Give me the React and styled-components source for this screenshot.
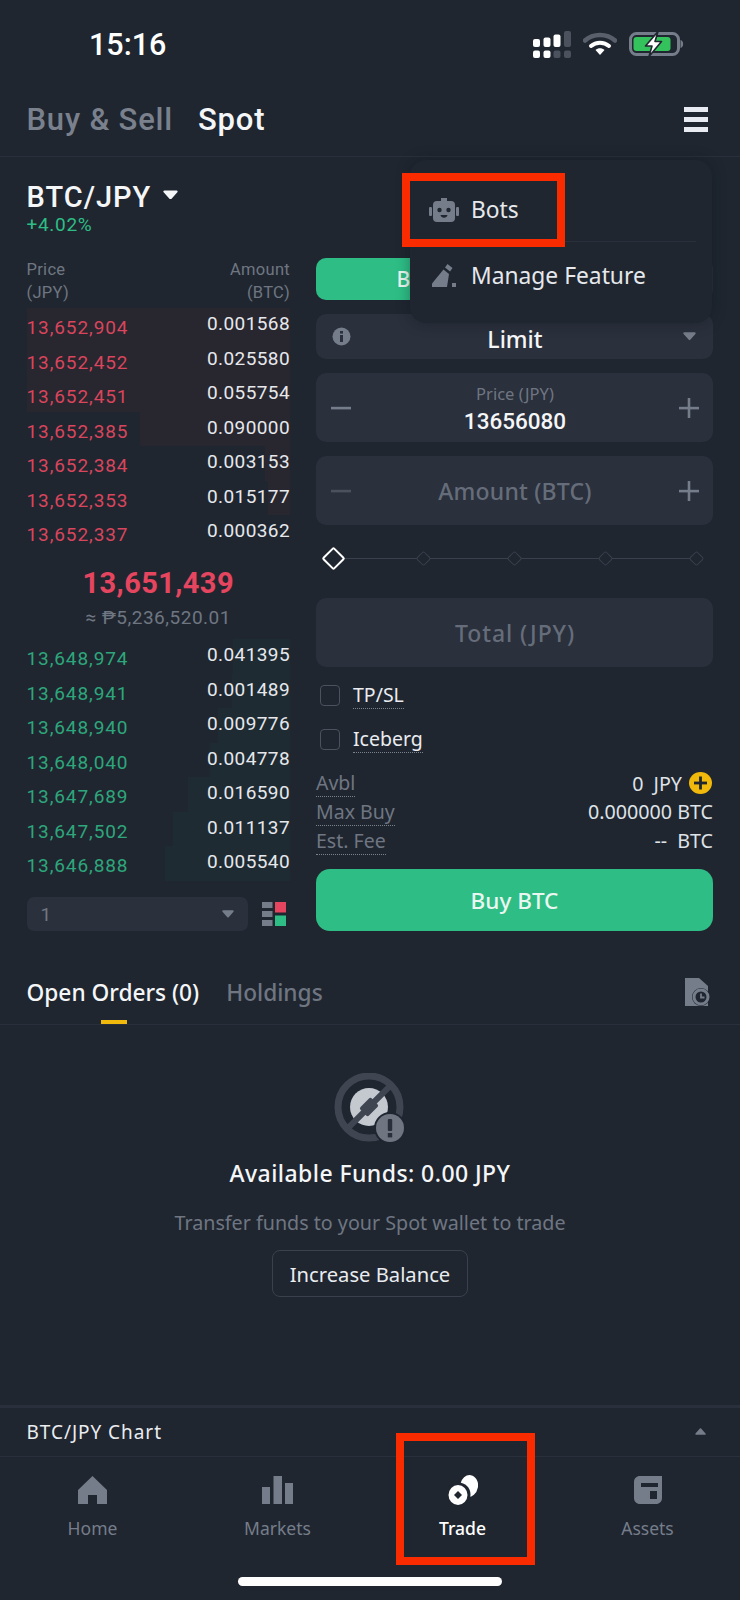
import React from 'react';
import styled, { createGlobalStyle } from 'styled-components';

const GlobalStyle = createGlobalStyle`
  html, body { margin: 0; padding: 0; background: #1f2630; }
  * { box-sizing: border-box; }
`;

const sans = `"Noto Sans", "Open Sans", sans-serif`;
const din = `Roboto, "Liberation Sans", sans-serif`;

const asks = [
  ['13,652,904', '0.001568', 263],
  ['13,652,452', '0.025580', 263],
  ['13,652,451', '0.055754', 263],
  ['13,652,385', '0.090000', 150],
  ['13,652,384', '0.003153', 25],
  ['13,652,353', '0.015177', 22],
  ['13,652,337', '0.000362', 0],
];

const bids = [
  ['13,648,974', '0.041395', 57],
  ['13,648,941', '0.001489', 58],
  ['13,648,940', '0.009776', 72],
  ['13,648,040', '0.004778', 80],
  ['13,647,689', '0.016590', 102],
  ['13,647,502', '0.011137', 117],
  ['13,646,888', '0.005540', 125],
];

const Page = styled.div`
  position: relative;
  width: 740px;
  height: 1600px;
  overflow: hidden;
  display: flex;
  flex-direction: column;
  background: #1f2630;
  color: #eaecef;
  font-family: ${sans};
`;

const StatusBar = styled.div`
  height: 88px;
  flex: none;
  display: flex;
  align-items: center;
  justify-content: space-between;
  padding: 0 56px 0 89px;
`;

const Clock = styled.span`
  font-family: ${din};
  font-size: 30.5px;
  font-weight: 500;
  color: #fff;
`;

const StatusIcons = styled.div`
  display: flex;
  align-items: center;
  gap: 12px;
`;

const Header = styled.header`
  height: 69px;
  flex: none;
  display: flex;
  align-items: flex-start;
  padding: 13px 32px 0 26.5px;
  border-bottom: 1px solid #2a303b;
`;

const HeaderTab = styled.span`
  font-family: ${din};
  font-size: 31px;
  line-height: 38px;
  font-weight: 500;
  letter-spacing: 0.8px;
  margin-right: 25px;
  color: ${p => (p.$active ? '#f5f6f8' : '#7a818d')};
`;

const Burger = styled.svg`
  margin-left: auto;
  margin-top: 6px;
`;

const Main = styled.main`
  flex: none;
  display: grid;
  grid-template-columns: 263.5px 397px;
  column-gap: 26px;
  padding: 0 27px 0 26.5px;
`;

const BookColumn = styled.section`
  padding-top: 25px;
`;

const PairRow = styled.div`
  height: 30px;
  display: flex;
  align-items: center;
  gap: 12px;
`;

const PairName = styled.span`
  font-family: ${din};
  font-size: 29px;
  font-weight: 500;
  letter-spacing: 1px;
  color: #f5f6f8;
`;

const PairCaret = styled.span`
  display: flex;
  margin-bottom: 5px;
`;

const Change = styled.div`
  height: 20px;
  margin-top: 3px;
  font-family: ${din};
  font-size: 19px;
  line-height: 20px;
  letter-spacing: 0.7px;
  color: #2ebd85;
`;

const BookHead = styled.div`
  margin: 23px 0 4px;
  display: flex;
  justify-content: space-between;
  font-family: ${din};
  font-size: 16.5px;
  line-height: 23px;
  letter-spacing: 0.3px;
  color: #6f7682;
`;

const HeadRight = styled.div`
  text-align: right;
`;

const BookRow = styled.div`
  position: relative;
  height: 34.5px;
  display: flex;
  justify-content: space-between;
  font-family: ${din};
  font-size: 19px;
`;

const DepthBar = styled.div`
  position: absolute;
  top: 0;
  right: 0;
  bottom: 0;
  background: ${p => (p.$side === 'ask' ? '#28262f' : '#1f2b33')};
`;

const RowPrice = styled.span`
  position: relative;
  line-height: 39px;
  letter-spacing: 0.9px;
  color: ${p => (p.$side === 'ask' ? '#d9455c' : '#2ea67c')};
`;

const RowAmount = styled.span`
  position: relative;
  line-height: 32px;
  letter-spacing: 0.4px;
  color: #e6e8ec;
`;

const LastPrice = styled.div`
  margin-top: 13.5px;
  text-align: center;
  font-family: ${din};
  font-size: 29px;
  line-height: 40px;
  font-weight: 700;
  letter-spacing: 0.4px;
  color: #e6455f;
`;

const FiatPrice = styled.div`
  margin: 3px 0 9px;
  text-align: center;
  font-family: ${din};
  font-size: 19px;
  line-height: 24px;
  letter-spacing: 0.5px;
  color: #6f7682;
`;

const BookFooter = styled.div`
  margin-top: 16.5px;
  display: flex;
  align-items: center;
  justify-content: space-between;
`;

const StepSelect = styled.div`
  width: 221px;
  height: 34px;
  display: flex;
  align-items: center;
  justify-content: space-between;
  padding: 0 14px;
  border-radius: 7px;
  background: #2a303c;
  font-family: ${din};
  font-size: 19px;
  color: #6f7682;
`;

const DepthIcon = styled.svg`
  margin-right: 4px;
`;

const FormColumn = styled.section`
  padding-top: 101px;
  display: flex;
  flex-direction: column;
  gap: 14px;
`;

const SideToggle = styled.div`
  height: 42px;
  display: grid;
  grid-template-columns: 199px 1fr;
  border-radius: 10px;
  overflow: hidden;
  background: #2a303c;
`;

const SideOption = styled.div`
  display: flex;
  align-items: center;
  justify-content: center;
  font-size: 21px;
  font-weight: 500;
  color: #eaf7f1;
  background: ${p => (p.$active ? '#2ebd85' : 'transparent')};
`;

const Field = styled.div`
  height: ${p => p.$height || 69}px;
  display: flex;
  align-items: center;
  padding: 0 14px 0 15px;
  border-radius: 10px;
  background: #2a303c;
`;

const FieldSide = styled.div`
  width: 20px;
  flex: none;
  display: flex;
  justify-content: center;
`;

const FieldCenter = styled.div`
  flex: 1;
  padding-top: ${p => p.$nudge || 0}px;
  text-align: center;
`;

const FieldLabel = styled.div`
  font-size: 16.5px;
  line-height: 24px;
  color: #6f7682;
`;

const FieldValue = styled.div`
  font-family: ${din};
  font-size: 22.5px;
  line-height: 30px;
  font-weight: 500;
  color: #f5f6f8;
`;

const FieldText = styled.div`
  font-size: 23px;
  line-height: 30px;
  font-weight: 500;
  letter-spacing: ${p => p.$spacing || 0}px;
  color: ${p => (p.$muted ? '#666d7a' : '#f5f6f8')};
`;

const Slider = styled.div`
  position: relative;
  height: 38px;
  margin-bottom: 7px;
  display: flex;
  align-items: center;
  justify-content: space-between;
  padding: 0 5px;

  &::before {
    content: '';
    position: absolute;
    left: 17px;
    right: 17px;
    top: 50%;
    height: 1px;
    background: #3a404c;
  }
`;

const Stop = styled.div`
  position: relative;
  width: 24px;
  height: 24px;
  display: flex;
  align-items: center;
  justify-content: center;
`;

const Diamond = styled.div`
  width: ${p => (p.$active ? 17 : 11)}px;
  height: ${p => (p.$active ? 17 : 11)}px;
  transform: rotate(45deg);
  border-radius: 2px;
  border: ${p => (p.$active ? '2px solid #fff' : '1.5px solid #3a404c')};
  background: #1f2630;
`;

const Checks = styled.div`
  display: flex;
  flex-direction: column;
  gap: 16px;
`;

const CheckRow = styled.div`
  height: 28px;
  display: flex;
  align-items: center;
  gap: 13px;
  padding-left: 4px;
`;

const Box = styled.span`
  width: 20px;
  height: 21px;
  border: 1.5px solid #4b515d;
  border-radius: 4px;
`;

const Hint = styled.span`
  font-size: 19.5px;
  line-height: 27px;
  color: ${p => (p.$muted ? '#6f7682' : '#eaecef')};
  border-bottom: 1px dotted #7b818c;
`;

const InfoList = styled.div`
  height: 86px;
  margin-top: 2px;
  display: grid;
  grid-template-rows: repeat(3, 1fr);
`;

const InfoRow = styled.div`
  display: flex;
  align-items: center;
  justify-content: space-between;
`;

const InfoValue = styled.span`
  display: flex;
  align-items: center;
  font-size: 19.7px;
  word-spacing: ${p => (p.$wide ? 5 : 0)}px;
  color: #dfe2e7;
`;

const CoinButton = styled.span`
  display: flex;
  margin: 0 1px 0 7px;
`;

const BuyButton = styled.button`
  height: 62px;
  border: 0;
  border-radius: 14px;
  background: #2ebd85;
  color: #eaf7f1;
  font-family: ${sans};
  font-size: 22.5px;
  font-weight: 500;
`;

const OrderTabs = styled.div`
  position: relative;
  height: 94px;
  flex: none;
  padding: 48px 30px 0 26.5px;
  display: flex;
  align-items: flex-start;
  gap: 27px;
  border-bottom: 1px solid #2a303b;
`;

const OrderTab = styled.span`
  position: relative;
  height: 45px;
  font-size: 22.7px;
  line-height: 28px;
  font-weight: 500;
  color: ${p => (p.$active ? '#f5f6f8' : '#6f7682')};

  ${p => p.$active && `
    &::after {
      content: '';
      position: absolute;
      left: 74px;
      bottom: 0;
      width: 26px;
      height: 4px;
      background: #f0b90b;
    }
  `}
`;

const HistoryIcon = styled.svg`
  margin-left: auto;
  margin-top: -1px;
`;

const Empty = styled.section`
  flex: 1;
  padding-top: 48px;
  display: flex;
  flex-direction: column;
  align-items: center;
`;

const EmptyTitle = styled.div`
  margin-top: 15px;
  font-size: 23px;
  line-height: 30px;
  font-weight: 500;
  letter-spacing: 0.43px;
  color: #f5f6f8;
`;

const EmptyText = styled.div`
  margin-top: 22px;
  font-size: 19.7px;
  line-height: 26px;
  color: #6f7682;
`;

const OutlineButton = styled.button`
  margin-top: 14px;
  width: 196px;
  height: 47px;
  border: 1.5px solid #3a404c;
  border-radius: 8px;
  background: transparent;
  color: #eaecef;
  font-family: ${sans};
  font-size: 20.2px;
`;

const ChartBar = styled.div`
  height: 52px;
  flex: none;
  display: flex;
  align-items: center;
  justify-content: space-between;
  padding: 0 34px 0 26.5px;
  border-top: 3px solid #2a303b;
  border-bottom: 1px solid #2a303b;
  font-size: 19px;
  letter-spacing: 0.95px;
  color: #eaecef;
`;

const Nav = styled.nav`
  height: 120px;
  flex: none;
  display: grid;
  grid-template-columns: repeat(4, 1fr);
  padding-top: 18px;
`;

const NavItem = styled.div`
  display: flex;
  flex-direction: column;
  align-items: center;
`;

const NavIcon = styled.div`
  height: 30px;
  display: flex;
  align-items: center;
  justify-content: center;
  color: ${p => (p.$active ? '#fff' : '#767d8a')};
`;

const NavLabel = styled.span`
  margin-top: 11px;
  font-size: 17.5px;
  line-height: 24px;
  font-weight: ${p => (p.$active ? 500 : 400)};
  color: ${p => (p.$active ? '#fff' : '#767d8a')};
`;

const HomeIndicator = styled.div`
  width: 264px;
  height: 9px;
  flex: none;
  margin: 0 auto 14px;
  border-radius: 5px;
  background: #fff;
`;

const Menu = styled.div`
  position: absolute;
  top: 160px;
  left: 410px;
  width: 302px;
  height: 163px;
  padding: 0 16px 0 19px;
  border-radius: 16px;
  background: #1f2630;
  box-shadow: 0 0 14px rgba(12, 16, 22, 0.35);
`;

const MenuItem = styled.div`
  height: ${p => (p.$first ? 82 : 81)}px;
  display: flex;
  align-items: center;
  gap: 12px;
  padding: ${p => (p.$first ? '18px 0 0' : '0 0 15px')};
  border-bottom: ${p => (p.$first ? '1px solid #2a303b' : '0')};
  font-size: 22.8px;
  color: #e6e8ec;
`;

const MenuIcon = styled.span`
  width: 30px;
  flex: none;
  display: flex;
  justify-content: center;
`;

const Highlight = styled.div`
  position: absolute;
  top: ${p => p.$top}px;
  left: ${p => p.$left}px;
  width: ${p => p.$width}px;
  height: ${p => p.$height}px;
  border: 8px solid #fb2b00;
`;

const Caret = ({ size = 14, color = '#767d8a', up = false }) => (
  <svg width={size} height={size * 0.65} viewBox="0 0 20 13">
    <path
      d={up ? 'M10 2 L18 11 L2 11 Z' : 'M2 2 L18 2 L10 11 Z'}
      fill={color}
      stroke={color}
      strokeWidth="3"
      strokeLinejoin="round"
    />
  </svg>
);

const Signal = () => (
  <svg width="38" height="27" viewBox="0 0 38 27">
    <rect x="0" y="8" width="7" height="8" rx="2" fill="#fff" />
    <rect x="10.5" y="6.5" width="7" height="9.5" rx="2" fill="#fff" />
    <rect x="20.5" y="3.5" width="7" height="12.5" rx="2" fill="#fff" />
    <rect x="31" y="0" width="7" height="16" rx="2" fill="#4b515d" />
    <rect x="0" y="19.5" width="7" height="7.5" rx="2" fill="#fff" />
    <rect x="10.5" y="19.5" width="7" height="7.5" rx="2" fill="#fff" />
    <rect x="20.5" y="19.5" width="7" height="7.5" rx="2" fill="#4b515d" />
    <rect x="31" y="19.5" width="7" height="7.5" rx="2" fill="#4b515d" />
  </svg>
);

const Wifi = () => (
  <svg width="34" height="24" viewBox="0 0 34 24">
    <path d="M2 8.5 C10 1 24 1 32 8.5" fill="none" stroke="#5a606b" strokeWidth="4.5" strokeLinecap="round" />
    <path d="M8 14 C13 9.5 21 9.5 26 14" fill="none" stroke="#fff" strokeWidth="4" strokeLinecap="round" />
    <path d="M12.5 18 C15 15.6 19 15.6 21.5 18 L17 23 Z" fill="#fff" />
  </svg>
);

const Battery = () => (
  <svg width="55" height="26" viewBox="0 0 55 26">
    <rect x="1.5" y="2.5" width="48" height="21" rx="6" fill="none" stroke="#767d8a" strokeWidth="3" />
    <rect x="4.5" y="6" width="37" height="14" rx="3" fill="#34c25c" />
    <path d="M51.5 9 C55 9.5 55 16.5 51.5 17 Z" fill="#767d8a" />
    <path d="M29 0.5 L16.5 15 L23 15 L20 25.5 L32.5 10.5 L26 10.5 Z" fill="#fff" stroke="#1f2630" strokeWidth="1.6" strokeLinejoin="round" />
  </svg>
);

const InfoIcon = () => (
  <svg width="19" height="19" viewBox="0 0 19 19">
    <circle cx="9.5" cy="9.5" r="9" fill="#767d8a" />
    <rect x="8" y="8" width="3" height="7" fill="#2a303c" />
    <rect x="8" y="4" width="3" height="2.6" fill="#2a303c" />
  </svg>
);

const MathIcon = ({ plus, color = '#767d8a' }) => (
  <svg width="20" height="20" viewBox="0 0 20 20">
    <rect x="0" y="8.8" width="20" height="2.6" fill={color} />
    {plus && <rect x="8.7" y="0" width="2.6" height="20" fill={color} />}
  </svg>
);

const CoinPlus = () => (
  <svg width="23" height="22" viewBox="0 0 23 22">
    <ellipse cx="11.5" cy="11" rx="11.5" ry="11" fill="#f0b90b" />
    <rect x="5" y="9.6" width="13" height="2.8" fill="#1f2630" />
    <rect x="10.1" y="4.5" width="2.8" height="13" fill="#1f2630" />
  </svg>
);

const RobotIcon = () => (
  <svg width="30" height="24" viewBox="0 0 30 24" fill="#767d8a">
    <rect x="12" y="0" width="6" height="4" />
    <rect x="4" y="3" width="22" height="21" rx="4" />
    <rect x="0" y="9" width="3" height="9" rx="1" />
    <rect x="27" y="9" width="3" height="9" rx="1" />
    <circle cx="10.5" cy="12" r="2.2" fill="#1f2630" />
    <circle cx="19.5" cy="12" r="2.2" fill="#1f2630" />
    <path d="M11.5 17 H18.5 C18 20.5 12 20.5 11.5 17 Z" fill="#1f2630" />
  </svg>
);

const PenIcon = () => (
  <svg width="24" height="23" viewBox="0 0 24 23" fill="#767d8a">
    <path d="M15.5 0 L20.5 4 L18 7.5 L13 3.5 Z" />
    <path d="M11.5 5.5 L17 10 L15 23 L0 23 L0 19.5 Z" />
    <rect x="20" y="19" width="4" height="4" />
  </svg>
);

const HomeIcon = () => (
  <svg width="29" height="28" viewBox="0 0 29 28" fill="currentColor">
    <path d="M14.5 0 L29 14 V28 H19 V19 H10 V28 H0 V14 Z" />
  </svg>
);

const MarketsIcon = () => (
  <svg width="31" height="28" viewBox="0 0 31 28" fill="currentColor">
    <rect x="0" y="11" width="8" height="17" />
    <rect x="11.5" y="0" width="8.5" height="28" />
    <rect x="23" y="7" width="8" height="21" />
  </svg>
);

const TradeIcon = () => (
  <svg width="30" height="30" viewBox="0 0 30 30" fill="currentColor">
    <ellipse cx="21" cy="11" rx="9" ry="11" transform="rotate(10 21 11)" />
    <circle cx="10.5" cy="19.5" r="12" fill="#1f2630" />
    <ellipse cx="10" cy="20" rx="9.5" ry="10" />
    <path d="M10 16 L14 20 L10 24 L6 20 Z" fill="#1f2630" />
  </svg>
);

const AssetsIcon = () => (
  <svg width="28" height="28" viewBox="0 0 28 28" fill="currentColor">
    <path fillRule="evenodd" d="M6 0 H28 V22 C28 25.5 25.5 28 22 28 H6 C2.5 28 0 25.5 0 22 V6 C0 2.5 2.5 0 6 0 Z M7 7 V11 H24 V7 Z M16 15 V23 H23 V15 Z" />
  </svg>
);

const NoFundsIcon = () => (
  <svg width="72" height="70" viewBox="0 0 72 70">
    <circle cx="35" cy="34" r="31" fill="none" stroke="#3f4551" strokeWidth="7" />
    <circle cx="35" cy="34" r="19" fill="#c4c8cf" />
    <g transform="rotate(-45 35 34)">
      <rect x="3" y="31" width="64" height="6" fill="#3f4551" />
      <rect x="27" y="28" width="16" height="12" rx="2" fill="#3f4551" />
    </g>
    <circle cx="56" cy="55" r="16" fill="#1f2630" />
    <circle cx="56" cy="55" r="14" fill="#6f7682" />
    <rect x="53.8" y="46" width="4.4" height="12" rx="1" fill="#2a303b" />
    <rect x="53.8" y="60" width="4.4" height="4.4" fill="#2a303b" />
  </svg>
);

const Row = ({ row, side }) => (
  <BookRow>
    {row[2] > 0 && <DepthBar $side={side} style={{ width: row[2] }} />}
    <RowPrice $side={side}>{row[0]}</RowPrice>
    <RowAmount>{row[1]}</RowAmount>
  </BookRow>
);

export default function App() {
  return (
    <Page>
      <GlobalStyle />

      <StatusBar>
        <Clock>15:16</Clock>
        <StatusIcons>
          <Signal />
          <Wifi />
          <Battery />
        </StatusIcons>
      </StatusBar>

      <Header>
        <HeaderTab>Buy &amp; Sell</HeaderTab>
        <HeaderTab $active>Spot</HeaderTab>
        <Burger width="24" height="25" viewBox="0 0 24 25" fill="#e8ebf2">
          <rect width="24" height="5" />
          <rect y="10" width="24" height="5" />
          <rect y="20" width="24" height="5" />
        </Burger>
      </Header>

      <Main>
        <BookColumn>
          <PairRow>
            <PairName>BTC/JPY</PairName>
            <PairCaret><Caret size={15} color="#f5f6f8" /></PairCaret>
          </PairRow>
          <Change>+4.02%</Change>
          <BookHead>
            <div>Price<br />(JPY)</div>
            <HeadRight>Amount<br />(BTC)</HeadRight>
          </BookHead>
          {asks.map(r => <Row key={r[0]} row={r} side="ask" />)}
          <LastPrice>13,651,439</LastPrice>
          <FiatPrice>≈ ₱5,236,520.01</FiatPrice>
          {bids.map(r => <Row key={r[0]} row={r} side="bid" />)}
          <BookFooter>
            <StepSelect>
              1
              <Caret size={12} />
            </StepSelect>
            <DepthIcon width="24" height="24" viewBox="0 0 24 24">
              <rect width="10.5" height="6" fill="#767d8a" />
              <rect y="9" width="10.5" height="6" fill="#767d8a" />
              <rect y="18" width="10.5" height="6" fill="#767d8a" />
              <rect x="13" width="11" height="10.5" fill="#e6455f" />
              <rect x="13" y="13.5" width="11" height="10.5" fill="#2ebd85" />
            </DepthIcon>
          </BookFooter>
        </BookColumn>

        <FormColumn>
          <SideToggle>
            <SideOption $active>Buy</SideOption>
            <SideOption />
          </SideToggle>
          <Field $height={45}>
            <FieldSide><InfoIcon /></FieldSide>
            <FieldCenter $nudge={4}><FieldText>Limit</FieldText></FieldCenter>
            <FieldSide><Caret size={13} /></FieldSide>
          </Field>
          <Field>
            <FieldSide><MathIcon /></FieldSide>
            <FieldCenter $nudge={2}>
              <FieldLabel>Price (JPY)</FieldLabel>
              <FieldValue>13656080</FieldValue>
            </FieldCenter>
            <FieldSide><MathIcon plus /></FieldSide>
          </Field>
          <Field>
            <FieldSide><MathIcon color="#4b515d" /></FieldSide>
            <FieldCenter><FieldText $muted $spacing={0.2}>Amount (BTC)</FieldText></FieldCenter>
            <FieldSide><MathIcon plus /></FieldSide>
          </Field>
          <Slider>
            {[0, 1, 2, 3, 4].map(i => (
              <Stop key={i}><Diamond $active={i === 0} /></Stop>
            ))}
          </Slider>
          <Field>
            <FieldCenter><FieldText $muted $spacing={0.9}>Total (JPY)</FieldText></FieldCenter>
          </Field>
          <Checks>
            <CheckRow><Box /><Hint>TP/SL</Hint></CheckRow>
            <CheckRow><Box /><Hint>Iceberg</Hint></CheckRow>
          </Checks>
          <InfoList>
            <InfoRow>
              <Hint $muted>Avbl</Hint>
              <InfoValue $wide>0 JPY<CoinButton><CoinPlus /></CoinButton></InfoValue>
            </InfoRow>
            <InfoRow>
              <Hint $muted>Max Buy</Hint>
              <InfoValue>0.000000 BTC</InfoValue>
            </InfoRow>
            <InfoRow>
              <Hint $muted>Est. Fee</Hint>
              <InfoValue $wide>-- BTC</InfoValue>
            </InfoRow>
          </InfoList>
          <BuyButton>Buy BTC</BuyButton>
        </FormColumn>
      </Main>

      <OrderTabs>
        <OrderTab $active>Open Orders (0)</OrderTab>
        <OrderTab>Holdings</OrderTab>
        <HistoryIcon width="25" height="28" viewBox="0 0 25 28">
          <path d="M0 0 H14 L23 8 V28 H0 Z" fill="#767d8a" />
          <circle cx="16" cy="19" r="9" fill="#1f2630" />
          <circle cx="16" cy="19" r="7" fill="none" stroke="#767d8a" strokeWidth="3" />
          <path d="M16 15.5 V19.5 H19.5" fill="none" stroke="#767d8a" strokeWidth="1.8" />
        </HistoryIcon>
      </OrderTabs>

      <Empty>
        <NoFundsIcon />
        <EmptyTitle>Available Funds: 0.00 JPY</EmptyTitle>
        <EmptyText>Transfer funds to your Spot wallet to trade</EmptyText>
        <OutlineButton>Increase Balance</OutlineButton>
      </Empty>

      <ChartBar>
        BTC/JPY Chart
        <Caret size={11} up />
      </ChartBar>

      <Nav>
        <NavItem><NavIcon><HomeIcon /></NavIcon><NavLabel>Home</NavLabel></NavItem>
        <NavItem><NavIcon><MarketsIcon /></NavIcon><NavLabel>Markets</NavLabel></NavItem>
        <NavItem><NavIcon $active><TradeIcon /></NavIcon><NavLabel $active>Trade</NavLabel></NavItem>
        <NavItem><NavIcon><AssetsIcon /></NavIcon><NavLabel>Assets</NavLabel></NavItem>
      </Nav>
      <HomeIndicator />

      <Menu>
        <MenuItem $first><MenuIcon><RobotIcon /></MenuIcon>Bots</MenuItem>
        <MenuItem><MenuIcon><PenIcon /></MenuIcon>Manage Feature</MenuItem>
      </Menu>

      <Highlight $top={173} $left={402} $width={163} $height={74} />
      <Highlight $top={1433} $left={396} $width={139} $height={132} />
    </Page>
  );
}
